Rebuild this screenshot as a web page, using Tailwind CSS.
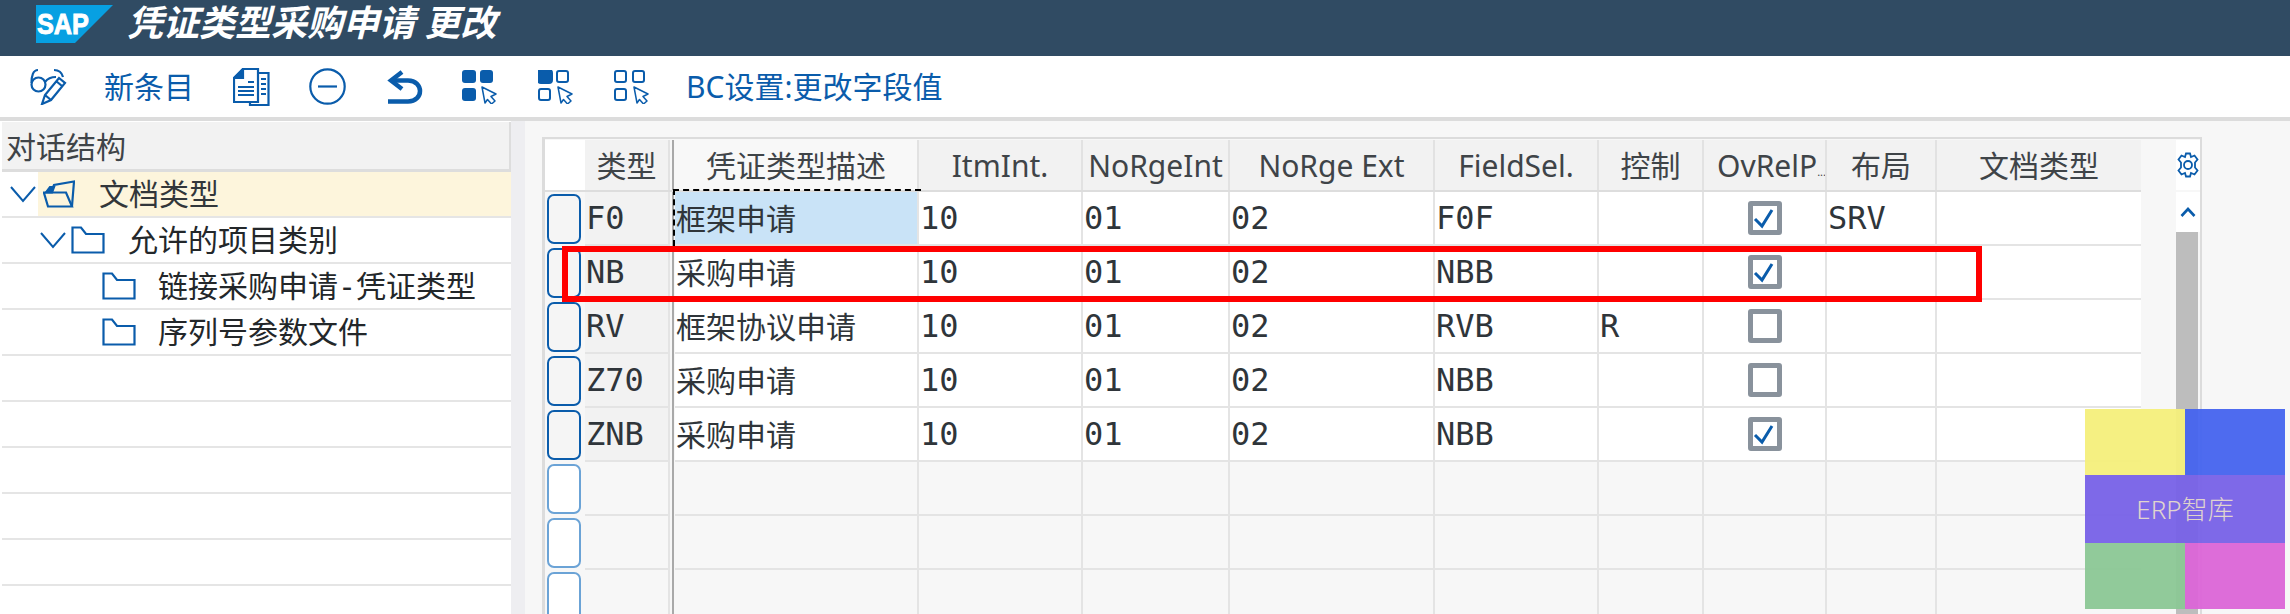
<!DOCTYPE html>
<html lang="zh-CN">
  <head>
    <meta charset="UTF-8" />
    <script src="https://cdn.jsdelivr.net/npm/@tailwindcss/browser@4"></script>
    <title>凭证类型采购申请 更改</title>
  </head>
  <body class="relative w-[2290px] h-[614px] overflow-hidden bg-white text-[#32363a] font-['Noto_Sans','Noto_Sans_CJK_SC',sans-serif]">
    <!-- title bar -->
    <header class="h-[56px] bg-[#304b63] flex items-center pl-[36px]">
      <svg width="77" height="38" viewBox="0 0 77 38" class="-mt-[8px]">
        <polygon points="0,0 77,0 39,38 0,38" fill="#07a0e2" />
        <text x="1" y="29" fill="#fff" stroke="#fff" stroke-width="0.9" font-family="Liberation Sans" font-weight="700" font-size="29" textLength="52" lengthAdjust="spacingAndGlyphs">SAP</text>
      </svg>
      <h1 class="ml-[14px] -mt-[10px] text-[36px] leading-none font-bold italic text-white">凭证类型采购申请 更改</h1>
    </header>

    <!-- toolbar -->
    <nav class="h-[61px] flex items-center pl-[30px] text-[#0a5cab] text-[30px]">
      <svg width="37" height="37" viewBox="0 0 37 37" fill="none" stroke="#0a5cab" stroke-width="2.2">
        <circle cx="8.5" cy="16.5" r="7" />
        <path d="M1.5 15 C1.5 8 3 2 8 2 M15 14 C18 10 22 9 26 9 M24 2 C29 2 32 5 33 9" />
        <path d="M12 36 L15 27 L29 10 L35 15 L21 32 Z M15 27 L21 32 M26 13 L32 18" />
      </svg>
      <span class="ml-[37px] leading-none">新条目</span>
      <svg width="37" height="38" viewBox="0 0 37 38" fill="none" stroke="#0a5cab" stroke-width="2.2" class="ml-[39px]">
        <path d="M26 5 H35.5 V37 H17 V34" />
        <path d="M10 1 H25 V34 H1 V10 Z" />
        <path d="M10 1 L1 10 H10 Z" fill="#0a5cab" />
        <path d="M15 14 H21 M5 19 H21 M5 23 H21 M5 27 H21 M28 11 H33 M28 16 H33 M28 21 H33 M28 26 H33" />
      </svg>
      <svg width="37" height="37" viewBox="0 0 37 37" fill="none" stroke="#0a5cab" stroke-width="2.2" class="ml-[39px]">
        <circle cx="18.5" cy="18.5" r="17.2" />
        <path d="M9 18.5 H28" />
      </svg>
      <svg width="36" height="34" viewBox="0 0 36 34" fill="none" stroke="#0a5cab" stroke-width="4.5" class="ml-[41px]">
        <path d="M15 2 L4 10.5 L15 19" />
        <path d="M4 10.5 H21 C37 10.5 37 31.5 21 31.5 H1" />
      </svg>
      <svg width="36" height="34" viewBox="0 0 36 34" class="ml-[39px]" fill="#0a5cab">
        <rect x="0" y="0" width="14" height="13" rx="3" />
        <rect x="18" y="0" width="13" height="13" rx="3" />
        <rect x="0" y="18" width="14" height="13" rx="3" />
        <path d="M20 17 L34 24 L29 26.5 L33 31 L29.5 34 L25.5 29.5 L23 33 Z" fill="#fff" stroke="#0a5cab" stroke-width="1.5" stroke-linejoin="round" />
      </svg>
      <svg width="36" height="34" viewBox="0 0 36 34" class="ml-[40px]" fill="none" stroke="#0a5cab" stroke-width="2">
        <rect x="0" y="0" width="14" height="13" rx="3" fill="#0a5cab" />
        <rect x="19" y="1" width="11" height="11" rx="2" />
        <rect x="1" y="19" width="11" height="11" rx="2" />
        <path d="M20 17 L34 24 L29 26.5 L33 31 L29.5 34 L25.5 29.5 L23 33 Z" fill="#fff" stroke-width="1.5" stroke-linejoin="round" />
      </svg>
      <svg width="36" height="34" viewBox="0 0 36 34" class="ml-[40px]" fill="none" stroke="#0a5cab" stroke-width="2">
        <rect x="1" y="1" width="11" height="11" rx="2" />
        <rect x="19" y="1" width="11" height="11" rx="2" />
        <rect x="1" y="19" width="11" height="11" rx="2" />
        <path d="M20 17 L34 24 L29 26.5 L33 31 L29.5 34 L25.5 29.5 L23 33 Z" fill="#fff" stroke-width="1.5" stroke-linejoin="round" />
      </svg>
      <span class="ml-[36px] leading-none">BC设置:更改字段值</span>
    </nav>
    <div class="h-[4px] bg-[#dcdcdc]"></div>

    <main class="flex h-[493px]">
      <!-- dialog structure tree -->
      <aside class="w-[511px] pl-[2px] pt-[1px] shrink-0 bg-white">
        <div class="h-[50px] bg-[#f2f2f2] border-b-[3px] border-r-2 border-[#dddddd] pl-[4px] pt-[2px] flex items-center text-[30px] leading-none text-[#3f4448]">对话结构</div>
        <ul id="tree" class="text-[30px] leading-none font-['DejaVu_Sans_Mono','Noto_Sans_CJK_SC',monospace]">
          <li class="h-[46px] border-b-2 border-[#e5e5e5] flex items-center">
            <svg width="36" height="44" viewBox="0 0 36 44" fill="none" stroke="#0a5cab" stroke-width="2" class="ml-[6px] -mr-[6px]"><path d="M3 15 L15 29 L27 15" /></svg>
            <div class="flex-1 h-full bg-[#fdf5dc] flex items-center pl-[5px]">
              <svg width="32" height="28" viewBox="0 0 32 28" fill="none" stroke="#0a5cab" stroke-width="2.2">
                <path d="M1 13 L5 26.5 H29 L23 12.5 H1 Z" />
                <path d="M8 12 L11 5 L31 1.5 L29 26" />
                <path d="M3 12.5 L7 7 H11 L9 12.5 Z" fill="#0a5cab" />
              </svg>
              <span class="ml-[24px] mt-[2px]">文档类型</span>
            </div>
          </li>
          <li class="h-[46px] border-b-2 border-[#e5e5e5] flex items-center pl-[37px]">
            <svg width="28" height="44" viewBox="0 0 28 44" fill="none" stroke="#0a5cab" stroke-width="2"><path d="M2 15 L14 29 L26 15" /></svg>
            <svg width="34" height="28" viewBox="0 0 34 28" fill="none" stroke="#0a5cab" stroke-width="2.2" class="ml-[4px]"><path d="M1.5 1.5 H10 L15 8 H32.5 V26.5 H1.5 Z" /></svg>
            <span class="ml-[23px] mt-[2px] text-[#23272a]">允许的项目类别</span>
          </li>
          <li class="h-[46px] border-b-2 border-[#e5e5e5] flex items-center pl-[100px]">
            <svg width="34" height="28" viewBox="0 0 34 28" fill="none" stroke="#0a5cab" stroke-width="2.2"><path d="M1.5 1.5 H10 L15 8 H32.5 V26.5 H1.5 Z" /></svg>
            <span class="ml-[22px] mt-[2px] text-[#23272a]">链接采购申请-凭证类型</span>
          </li>
          <li class="h-[46px] border-b-2 border-[#e5e5e5] flex items-center pl-[100px]">
            <svg width="34" height="28" viewBox="0 0 34 28" fill="none" stroke="#0a5cab" stroke-width="2.2"><path d="M1.5 1.5 H10 L15 8 H32.5 V26.5 H1.5 Z" /></svg>
            <span class="ml-[22px] mt-[2px] text-[#23272a]">序列号参数文件</span>
          </li>
          <li class="h-[46px] border-b-2 border-[#e5e5e5]"></li>
          <li class="h-[46px] border-b-2 border-[#e5e5e5]"></li>
          <li class="h-[46px] border-b-2 border-[#e5e5e5]"></li>
          <li class="h-[46px] border-b-2 border-[#e5e5e5]"></li>
          <li class="h-[46px] border-b-2 border-[#e5e5e5]"></li>
        </ul>
      </aside>
      <div class="w-[14px] bg-[#eeeef1] shrink-0"></div>

      <!-- table area -->
      <section class="flex-1 bg-[#f7f7f7] pl-[17px] pt-[16px]">
        <div class="w-[1660px] h-[477px] border-t-2 border-l-[3px] border-r-2 border-[#dcdcdc] pt-[1px] flex">
          <div class="w-[1596px] shrink-0">
            <div class="grid grid-cols-[40px_85px_5px_244px_164px_147px_205px_164px_105px_123px_110px_204px] h-[52px] text-[30px] leading-none text-[#3f4448] border-b-2 border-[#dddddd]">
              <div class="bg-white"></div>
              <div class="bg-[#f2f2f2] border-r-2 border-[#e2e2e2] flex items-center justify-center pt-[2px]">类型</div>
              <div class="border-r-2 border-[#a9a9a9] bg-[#f7f7f7] w-[4px]"></div>
              <div class="bg-[#f8f8f8] border-r-2 border-[#e2e2e2] flex items-center justify-center pt-[2px]">凭证类型描述</div>
              <div class="bg-[#f2f2f2] border-r-2 border-[#e2e2e2] flex items-center justify-center pt-[2px]">ItmInt.</div>
              <div class="bg-[#f2f2f2] border-r-2 border-[#e2e2e2] flex items-center justify-center pt-[2px]">NoRgeInt</div>
              <div class="bg-[#f2f2f2] border-r-2 border-[#e2e2e2] flex items-center justify-center pt-[2px]">NoRge Ext</div>
              <div class="bg-[#f2f2f2] border-r-2 border-[#e2e2e2] flex items-center justify-center pt-[2px]">FieldSel.</div>
              <div class="bg-[#f2f2f2] border-r-2 border-[#e2e2e2] flex items-center justify-center pt-[2px]">控制</div>
              <div class="bg-[#f2f2f2] border-r-2 border-[#e2e2e2] flex items-center pl-[13px] pt-[2px] whitespace-nowrap overflow-hidden">OvRelP<span class="text-[11px] self-end mb-[13px]">...</span></div>
              <div class="bg-[#f2f2f2] border-r-2 border-[#e2e2e2] flex items-center justify-center pt-[2px]">布局</div>
              <div class="bg-[#f2f2f2] flex items-center justify-center pt-[2px]">文档类型</div>
            </div>
            <div id="rows"></div>
          </div>
          <div class="ml-[35px] w-[24px]">
            <div class="h-[50px] bg-white flex items-center justify-center">
              <svg width="22" height="26" viewBox="0 0 22 26" fill="none" stroke="#0a5cab" stroke-width="1.8">
                <path d="M9 1.5 H13 L14 5 L17.5 3.5 L20.5 7.5 L18 10.5 V15.5 L20.5 18.5 L17.5 22.5 L14 21 L13 24.5 H9 L8 21 L4.5 22.5 L1.5 18.5 L4 15.5 V10.5 L1.5 7.5 L4.5 3.5 L8 5 Z" />
                <circle cx="11" cy="13" r="4" />
              </svg>
            </div>
            <div class="mt-[2px] h-[40px] bg-white flex justify-center pt-[15px]">
              <svg width="16" height="10" viewBox="0 0 16 10" fill="none" stroke="#0a5cab" stroke-width="2.6"><path d="M1.5 9 L8 2 L14.5 9" /></svg>
            </div>
            <div class="h-[400px] bg-[#bdbdbd] w-[22px]"></div>
          </div>
        </div>
      </section>
    </main>

    <!-- focus frame of the selected cell -->
    <div class="absolute left-[673px] top-[189px] w-[248px] h-[57px] border-t-2 border-l-2 border-dashed border-black"></div>
    <!-- red highlight drawn on the screenshot -->
    <div class="absolute left-[562px] top-[246px] w-[1420px] h-[56px] border-[6px] border-[#ff0000]"></div>
    <!-- watermark -->
    <div class="absolute left-[2085px] top-[409px] w-[200px] h-[200px] grid grid-cols-2 grid-rows-[66px_68px_66px] opacity-95">
      <div class="bg-[#f5f07c]"></div>
      <div class="bg-[#4564ef]"></div>
      <div class="col-span-2 bg-[#7862e8] flex items-center justify-center text-[26px] font-light text-[#e0d4cc]">ERP智库</div>
      <div class="bg-[#8cc896]"></div>
      <div class="bg-[#dc66d8]"></div>
    </div>

    <script>
      const data = [
        ["F0", "框架申请", "10", "01", "02", "F0F", "", true, "SRV"],
        ["NB", "采购申请", "10", "01", "02", "NBB", "", true, ""],
        ["RV", "框架协议申请", "10", "01", "02", "RVB", "R", false, ""],
        ["Z70", "采购申请", "10", "01", "02", "NBB", "", false, ""],
        ["ZNB", "采购申请", "10", "01", "02", "NBB", "", true, ""],
      ];
      const cell = "border-r-2 border-b-2 border-[#e4e4e4] flex items-center pl-[1px]";
      const check = (on) => `
        <span class="w-[34px] h-[34px] border-[5px] rounded-[3px] border-[#89929c] bg-white flex items-center justify-center">
          ${on ? '<svg width="24" height="24" viewBox="0 0 24 24" fill="none" stroke="#0a5cab" stroke-width="3"><path d="M2 13 L9 20 L19 4" /></svg>' : ""}
        </span>`;
      let html = "";
      for (let i = 0; i < 8; i++) {
        const d = data[i];
        const bg = d ? "bg-white" : "bg-[#f7f7f7]";
        html += `
        <div class="grid grid-cols-[40px_85px_5px_244px_164px_147px_205px_164px_105px_123px_110px_204px] h-[54px] text-[32px] leading-none font-['DejaVu_Sans_Mono','Noto_Sans_CJK_SC',monospace] text-[#2f353a]">
          <div class="flex items-center pl-[2px]">
            <span class="w-[34px] h-[50px] rounded-[7px] border-2 ${d ? "border-[#0a5cab] bg-[#f5f5f5]" : "border-[#6ba3d6] bg-white"}"></span>
          </div>
          <div class="${d ? "bg-[#f2f2f2]" : ""} ${cell}">${d ? d[0] : ""}</div>
          <div class="border-r-2 border-[#a9a9a9] w-[4px]"></div>
          <div class="${i === 0 ? "bg-[#c9e3f7]" : bg} ${cell} pb-[3px] text-[30px] font-['Noto_Sans_CJK_SC',sans-serif]">${d ? d[1] : ""}</div>
          <div class="${bg} ${cell}">${d ? d[2] : ""}</div>
          <div class="${bg} ${cell}">${d ? d[3] : ""}</div>
          <div class="${bg} ${cell}">${d ? d[4] : ""}</div>
          <div class="${bg} ${cell}">${d ? d[5] : ""}</div>
          <div class="${bg} ${cell}">${d ? d[6] : ""}</div>
          <div class="${bg} ${cell} justify-center">${d ? check(d[7]) : ""}</div>
          <div class="${bg} ${cell}">${d ? d[8] : ""}</div>
          <div class="${bg} border-b-2 border-[#e4e4e4]"></div>
        </div>`;
      }
      document.getElementById("rows").innerHTML = html;
    </script>
  </body>
</html>
